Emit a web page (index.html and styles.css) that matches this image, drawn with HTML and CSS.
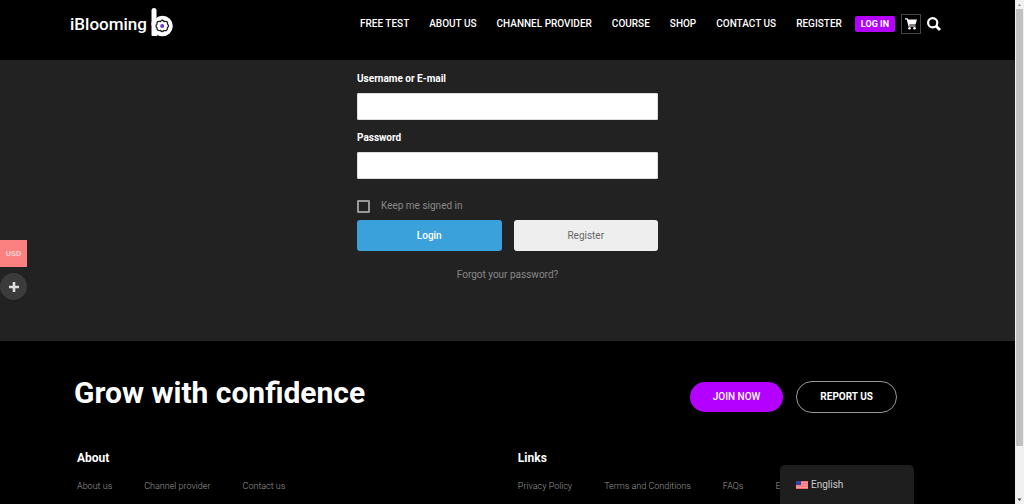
FILE: index.html
```html
<!DOCTYPE html>
<html lang="en">
<head>
    <meta charset="UTF-8">
    <meta name="viewport" content="width=device-width, initial-scale=1.0">
    <title>Login - iBlooming</title>
    <link rel="stylesheet" href="styles.css">
</head>
<body>

<div class="page">
    <header class="header">
        <a href="#" class="logo">
            <span class="logo-text">iBlooming</span>
            <svg class="logo-mark" width="22" height="30" viewBox="0 0 22 30" aria-hidden="true">
                <path d="M3 2.500v14" stroke="#fff" stroke-width="5" stroke-linecap="round"/>
                <rect x="0.5" y="14" width="6" height="14" rx="1" fill="#fff"/>
                <circle cx="11.500" cy="18" r="10.300" fill="#fff"/>
                <path d="M9.500 13.500q1.500-2.500 3.500 0q4-1 3.500 2.500q2 2 0 3.500q0 4-3.500 3q-2 2-3.500 0q-4 .5-3.500-3q-2-1.500 0-3.500q-.5-3.500 3.500-2.500z" fill="#fff" stroke="#222" stroke-width="1.300"/>
                <circle cx="11.200" cy="18" r="2" fill="#6a35d8"/>
            </svg>
        </a>
        <nav class="nav">
            <a href="#">FREE TEST</a>
            <a href="#">ABOUT US</a>
            <a href="#">CHANNEL PROVIDER</a>
            <a href="#">COURSE</a>
            <a href="#">SHOP</a>
            <a href="#">CONTACT US</a>
            <a href="#">REGISTER</a>
            <div class="nav-tools">
                <a href="#" class="login-link">LOG IN</a>
                <a href="#" class="cart" aria-label="Cart">
                    <svg width="12" height="12" viewBox="0 0 12 12">
                        <path d="M0 .8h2.200l1.800 7.200h6.500" fill="none" stroke="#fff" stroke-width="1.200"/>
                        <path d="M2.300 1.400H12L10.500 6.600H3.700z" fill="#fff"/>
                        <circle cx="4.500" cy="10.300" r="1.300" fill="#fff"/>
                        <circle cx="9.500" cy="10.300" r="1.300" fill="#fff"/>
                    </svg>
                </a>
                <button class="search" type="button" aria-label="Search">
                    <svg width="14" height="14" viewBox="0 0 14 14">
                        <circle cx="5.700" cy="5.700" r="4.600" fill="none" stroke="#fff" stroke-width="2.200"/>
                        <path d="M9 9l4 4" stroke="#fff" stroke-width="2.800"/>
                    </svg>
                </button>
            </div>
        </nav>
    </header>

    <main class="main">
        <form class="login-form">
            <label class="field-label" for="username">Username or E-mail</label>
            <input class="field" type="text" id="username" name="username">
            <label class="field-label" for="password">Password</label>
            <input class="field" type="password" id="password" name="password">
            <div class="remember">
                <input type="checkbox" id="remember" name="remember">
                <label for="remember">Keep me signed in</label>
            </div>
            <div class="form-buttons">
                <button type="submit" class="button button-login">Login</button>
                <button type="button" class="button button-register">Register</button>
            </div>
            <a href="#" class="forgot">Forgot your password?</a>
        </form>
    </main>

    <footer class="footer">
        <div class="footer-top">
            <h2>Grow with confidence</h2>
            <div class="footer-actions">
                <a href="#" class="pill pill-join">JOIN NOW</a>
                <a href="#" class="pill pill-report">REPORT US</a>
            </div>
        </div>
        <div class="footer-columns">
            <div class="footer-column">
                <h3>About</h3>
                <div class="footer-links">
                    <a href="#">About us</a>
                    <a href="#">Channel provider</a>
                    <a href="#">Contact us</a>
                </div>
            </div>
            <div class="footer-column">
                <h3>Links</h3>
                <div class="footer-links">
                    <a href="#">Privacy Policy</a>
                    <a href="#">Terms and Conditions</a>
                    <a href="#">FAQs</a>
                    <a href="#">E</a>
                </div>
            </div>
        </div>
    </footer>
</div>

<!-- Currency switcher -->
<div class="currency">
    <button type="button" class="currency-code">USD</button>
    <button type="button" class="currency-more" aria-label="More">
        <svg width="10" height="10" viewBox="0 0 10 10">
            <path d="M5 0v10M0 5h10" stroke="#ddd" stroke-width="2.600"/>
        </svg>
    </button>
</div>

<!-- Language switcher -->
<button type="button" class="language">
    <svg width="12" height="8" viewBox="0 0 12 8" aria-hidden="true">
        <rect width="12" height="8" fill="#ff9a9a"/>
        <path d="M0 .5h12M0 2.700h12M0 5h12M0 7.500h12" stroke="#f26a6f"/>
        <rect width="5" height="4" fill="#3a3fae"/>
    </svg>
    English
</button>

<div class="scrollbar" aria-hidden="true">
    <svg width="9" height="9" viewBox="0 0 9 9"><path d="M3 6l1.500-2L6 6z" fill="#888"/></svg>
    <div class="scrollbar-thumb"></div>
    <svg width="9" height="9" viewBox="0 0 9 9"><path d="M2.500 3.500h4l-2 2.500z" fill="#444"/></svg>
</div>

</body>
</html>
```
FILE: styles.css
```css
* {
    margin: 0;
    padding: 0;
    box-sizing: border-box;
}

body {
    background-color: #000;
    color: white;
    font-family: Roboto, "Liberation Sans", sans-serif;
    font-size: 10px;
    line-height: 16px;
    overflow: hidden;
}

a {
    color: inherit;
    text-decoration: none;
}

button {
    border: none;
    font-family: inherit;
    font-size: 10px;
    cursor: pointer;
}

svg {
    display: block;
}

.page {
    margin-right: 9px;
}

/* Header */
.header {
    display: flex;
    justify-content: space-between;
    align-items: flex-start;
    height: 60px;
    padding: 8px 74px 0 70px;
}

.logo {
    display: flex;
    gap: 4px;
}

.logo-text {
    font-size: 17px;
    font-weight: 500;
    line-height: 32px;
}

.nav {
    display: flex;
    align-items: center;
    gap: 20px;
    height: 32px;
    font-weight: 500;
}

.nav-tools {
    display: flex;
    align-items: center;
    gap: 6px;
    margin-left: -7px;
}

.login-link {
    padding: 0 6px;
    border-radius: 2px;
    background-color: #b300ff;
    font-size: 9px;
    font-weight: bold;
}

.cart {
    display: flex;
    align-items: center;
    justify-content: center;
    width: 20px;
    height: 20px;
    border: 1px solid #444;
}

.search {
    background: none;
}

/* Login form */
.main {
    height: 281px;
    padding-top: 11px;
    background-color: #222;
}

.login-form {
    display: flex;
    flex-direction: column;
    width: 301px;
    margin: 0 auto;
}

.field-label {
    margin-bottom: 6px;
    font-weight: bold;
}

.field {
    height: 27px;
    margin-bottom: 10px;
    padding: 0 8px;
    border: 1px solid #ddd;
    border-radius: 1px;
    background-color: white;
}

.remember {
    display: flex;
    align-items: center;
    gap: 11px;
    margin: 9px 0 6px;
    color: #888;
}

.remember input {
    appearance: none;
    width: 13px;
    height: 13px;
    border: 2px solid #999;
    border-radius: 1px;
}

.form-buttons {
    display: flex;
    gap: 12px;
    margin-bottom: 16px;
}

.button {
    flex: 1;
    height: 31px;
    border-radius: 3px;
}

.button-login {
    background-color: #3ba1da;
    color: white;
    font-weight: 500;
}

.button-register {
    background-color: #eee;
    color: #666;
}

.forgot {
    align-self: center;
    color: #888;
}

/* Footer */
.footer {
    padding: 32px 0 0 74px;
}

.footer-top {
    display: flex;
    justify-content: space-between;
    align-items: flex-end;
    margin-bottom: 37px;
    padding-right: 118px;
}

.footer-top h2 {
    font-size: 30px;
    line-height: 40px;
}

.footer-actions {
    display: flex;
    align-items: center;
    gap: 13px;
}

.pill {
    padding: 7px 23px;
    border-radius: 16px;
    font-weight: bold;
}

.pill-join {
    background-color: #b300ff;
    font-weight: 500;
}

.pill-report {
    border: 1px solid #999;
}

.footer-columns {
    display: flex;
    padding-left: 3px;
}

.footer-column {
    flex: 0 0 47%;
}

.footer-column h3 {
    margin-bottom: 12px;
    font-size: 12px;
    line-height: 16px;
}

.footer-links {
    display: flex;
    gap: 32px;
    color: #999;
    font-size: 9px;
    font-weight: 300;
}

/* Floating widgets */
.currency {
    position: fixed;
    top: 240px;
    left: 0;
}

.currency-code {
    display: block;
    width: 27px;
    height: 27px;
    margin-bottom: 6px;
    background-color: #fb8181;
    color: #f4dcdc;
    font-size: 8px;
    font-weight: 500;
}

.currency-more {
    display: flex;
    align-items: center;
    justify-content: center;
    width: 27px;
    height: 27px;
    border-radius: 50%;
    background-color: #3b3b3b;
}

.language {
    position: fixed;
    right: 110px;
    bottom: 0;
    display: flex;
    align-items: center;
    gap: 3px;
    width: 134px;
    height: 39px;
    padding-left: 16px;
    border-radius: 5px 5px 0 0;
    background-color: #1e1e1e;
    color: #ccc;
}

.scrollbar {
    position: fixed;
    top: 0;
    right: 0;
    bottom: 0;
    display: flex;
    flex-direction: column;
    width: 9px;
    background-color: #f1f1f1;
}

.scrollbar-thumb {
    width: 7px;
    height: 437px;
    margin: 0 1px auto;
    background-color: #c1c1c1;
}
```
